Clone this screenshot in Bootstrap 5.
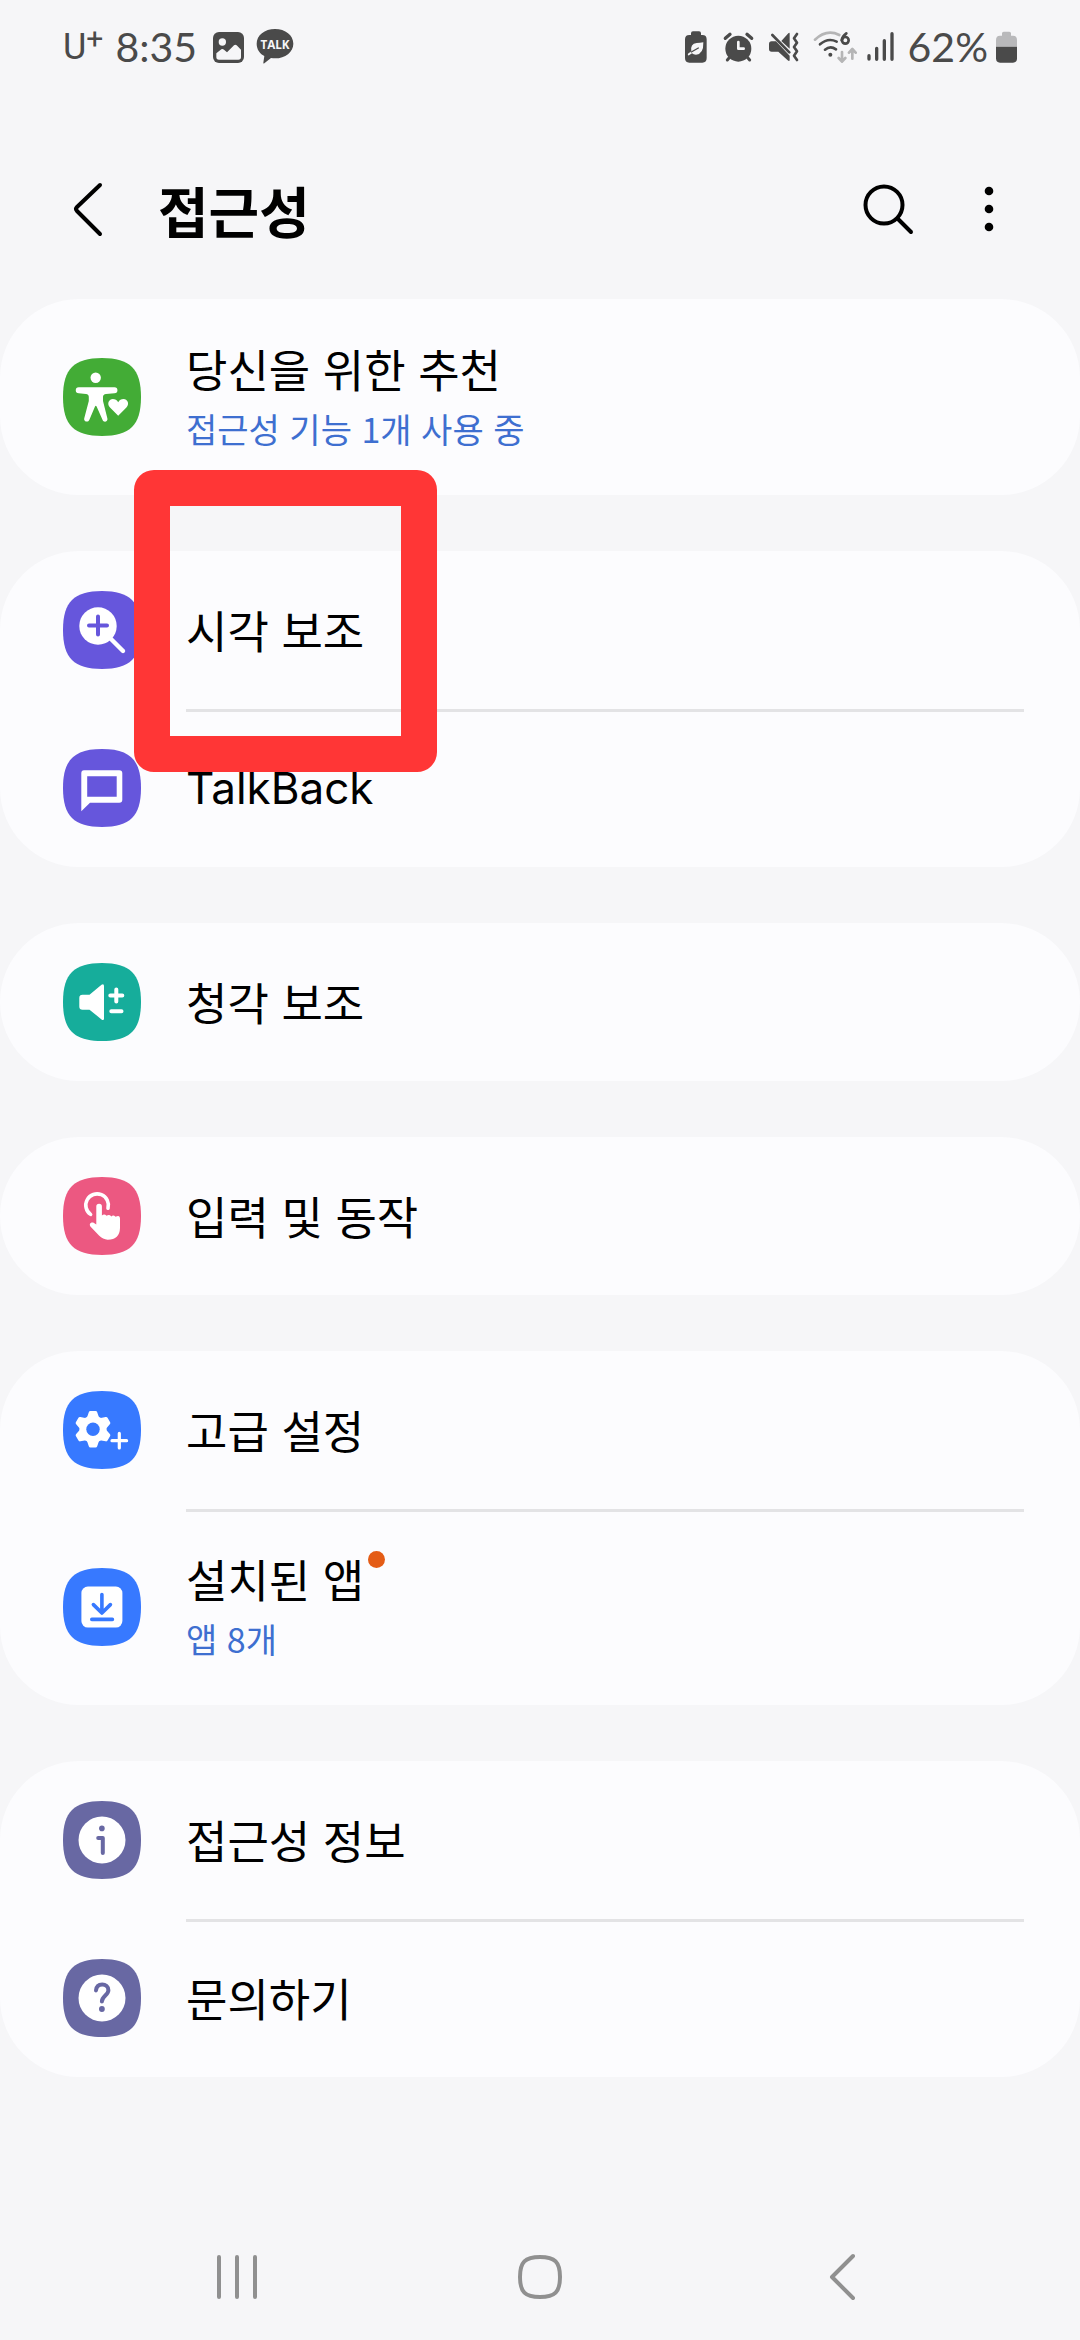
<!DOCTYPE html>
<html lang="ko">
<head>
<meta charset="utf-8">
<meta name="viewport" content="width=device-width, initial-scale=1">
<title>접근성</title>
<link href="https://cdn.jsdelivr.net/npm/bootstrap@5.3.0/dist/css/bootstrap.min.css" rel="stylesheet">
<style>
  body { background: #f6f6f8; color: #000; font-family: "Noto Sans CJK KR", "Noto Sans", sans-serif; }
  svg { display: block; flex: none; }
  .status-bar { height: 94px; padding: 0 63px; color: #4a4a4a; font: 400 41px/48px Lato, sans-serif; }
  .carrier { font-family: Roboto, sans-serif; font-size: 36px; }
  .carrier sup { font-size: 30px; top: -10px; line-height: 0; }
  .app-header { height: 205px; padding: 24px 70px 0 60px; }
  .app-header h1 { font-size: 55px; line-height: 72px; font-weight: 700; padding-left: 41px; }
  .icon-btn { border: 0; padding: 0; background: none; color: inherit; }
  .groups { gap: 56px; }
  .group { background: #fcfcfe; border-radius: 79px; position: relative; }
  .entry { min-height: 158px; padding: 0 56px 0 63px; gap: 45px; color: #000; text-decoration: none; }
  .entry.tall { min-height: 196px; }
  .entry-body { font-size: 45px; line-height: 60px; }
  .tall .entry-body { padding-top: 4px; }
  .entry + .entry .entry-body { box-shadow: inset 0 3px #e3e3e5; }
  .entry-sub { font-size: 34px; color: #3e6fd0; }
  .latin { font-family: Inter, sans-serif; font-size: 44px; }
  .new-dot { width: 17px; height: 17px; background: #e45c16; left: 100%; top: 2px; margin-left: 4px; }
  .highlight { left: 134px; top: -81px; width: 303px; height: 302px; border: 36px solid #ff3636; border-radius: 20px; z-index: 2; pointer-events: none; }
  .nav-keys { height: 126px; padding: 0 86px; color: #909090; }
</style>
</head>
<body>
<svg width="0" height="0" class="position-absolute" aria-hidden="true">
  <defs><path id="tile" d="M39 0C67 0 78 11 78 39S67 78 39 78 0 67 0 39 11 0 39 0Z"/></defs>
</svg>
<div class="min-vh-100 d-flex flex-column">

  <div class="status-bar d-flex align-items-center justify-content-between">
    <div class="d-flex align-items-center">
      <span class="carrier">U<sup>+</sup></span>
      <span class="ms-2 ps-1">8:35</span>
      <svg class="ms-3" width="31" height="34" viewBox="516 60 93 102" role="img" aria-label="사진">
        <rect x="516" y="66" width="93" height="93" rx="18" fill="currentColor"/>
        <circle cx="544" cy="96" r="11" fill="#f6f6f8"/>
        <path d="M526 130L541 118Q545 115 549 119L558 127L579 106Q583 102 587 106L600 119V142Q600 149 592 149H534Q526 149 526 142Z" fill="#f6f6f8"/>
      </svg>
      <svg class="ms-2 ps-1" width="42" height="36" viewBox="647 60 114 108" role="img" aria-label="카카오톡">
        <path d="M704 60C735 60 759 79 759 104S735 148 704 148Q698 148 692 147L672 163Q669 165 669 161L672 141C658 134 649 120 649 104C649 79 673 60 704 60Z" fill="currentColor"/>
        <text x="704" y="120" text-anchor="middle" font-family="Open Sans, sans-serif" font-size="35" font-weight="700" fill="#f6f6f8">TALK</text>
      </svg>
    </div>
    <div class="d-flex align-items-center">
      <svg width="37" height="34" viewBox="69 60 111 102" aria-hidden="true">
        <path d="M87 75V70Q87 64 93 64H111Q117 64 117 70V75H121Q134 75 134 88V144Q134 158 121 158H82Q69 158 69 144V88Q69 75 82 75Z" fill="currentColor"/>
        <path d="M124 97Q125 133 102 134Q94 134 90 130L81 136Q76 137 78 131L88 124Q84 101 104 99Q114 99 124 97Z" fill="#f6f6f8"/>
        <path d="M88 126L109 114" stroke="currentColor" stroke-width="4" stroke-linecap="round"/>
      </svg>
      <svg width="45" height="34" viewBox="180 60 135 102" aria-hidden="true">
        <circle cx="229" cy="116" r="39" fill="currentColor"/>
        <path d="M190 85L204 73M269 85L255 73" stroke="currentColor" stroke-width="10" stroke-linecap="round"/>
        <path d="M203 142L196 150M256 142L263 150" stroke="currentColor" stroke-width="9" stroke-linecap="round"/>
        <path d="M229 96V116H245" fill="none" stroke="#f6f6f8" stroke-width="8" stroke-linecap="round" stroke-linejoin="round"/>
      </svg>
      <svg width="44" height="34" viewBox="315 60 132 102" aria-hidden="true">
        <path d="M383 71V116L358 93L379 70Q383 66 383 71ZM329 94H342L383 137V149Q383 156 377 151L349 125H329Q321 125 321 117V102Q321 94 329 94Z" fill="currentColor"/>
        <path d="M331 75L382 127" stroke="currentColor" stroke-width="8" stroke-linecap="round"/>
        <path d="M405 72L396 85L405 98L396 111L405 124L396 137L405 150" fill="none" stroke="currentColor" stroke-width="8" stroke-linecap="round" stroke-linejoin="round"/>
      </svg>
      <svg width="54" height="34" viewBox="447 60 162 102" aria-hidden="true">
        <g fill="none" stroke-width="8" stroke-linecap="round" stroke-linejoin="round">
          <path d="M459 89Q494 56 532 75M540 126V154M530 144L540 155L550 144M571 146V118M561 128L571 117L581 128" stroke="#b5b5b6"/>
          <path d="M474 103Q498 82 524 95M489 119Q505 106 522 118" stroke="currentColor"/>
          <path d="M553 70Q541 79 539 91" stroke="currentColor"/>
          <circle cx="550" cy="91" r="10" stroke="currentColor"/>
        </g>
        <circle cx="505" cy="134" r="6" fill="currentColor"/>
      </svg>
      <svg width="43" height="34" viewBox="609 60 129 102" aria-hidden="true">
        <path d="M621 137V147M644 115V148M667 92V148M690 71V148" stroke="currentColor" stroke-width="10" stroke-linecap="round"/>
      </svg>
      <span class="me-2">62%</span>
      <svg width="21" height="34" viewBox="1008 60 63 102" aria-hidden="true">
        <path d="M1026 77V70Q1026 65 1031 65H1048Q1053 65 1053 70V77H1059Q1071 77 1071 90V110H1008V90Q1008 77 1020 77Z" fill="#b9b9bb"/>
        <path d="M1008 110H1071V145Q1071 158 1059 158H1020Q1008 158 1008 145Z" fill="currentColor"/>
      </svg>
    </div>
  </div>

  <header class="app-header d-flex align-items-center">
    <button class="icon-btn" type="button" aria-label="뒤로">
      <svg width="57" height="60" viewBox="0 0 57 60"><path d="M40 6L17 28Q15 30 17 32L40 55" fill="none" stroke="currentColor" stroke-width="4" stroke-linecap="round" stroke-linejoin="round"/></svg>
    </button>
    <h1 class="m-0 flex-grow-1">접근성</h1>
    <button class="icon-btn" type="button" aria-label="검색">
      <svg width="60" height="60" viewBox="0 0 60 60"><g fill="none" stroke="currentColor" stroke-width="4" stroke-linecap="round"><circle cx="22" cy="26" r="18.5"/><path d="M36 40L49 53"/></g></svg>
    </button>
    <button class="icon-btn ms-5" type="button" aria-label="옵션 더보기">
      <svg width="40" height="60" viewBox="0 0 40 60" fill="currentColor"><circle cx="19" cy="12" r="4.3"/><circle cx="19" cy="30" r="4.3"/><circle cx="19" cy="48" r="4.3"/></svg>
    </button>
  </header>

  <main class="groups d-flex flex-column">
    <section class="group">
      <a href="#" class="entry tall d-flex align-items-stretch">
        <svg class="align-self-center" width="78" height="78" viewBox="0 0 78 78" fill="#fff">
          <use href="#tile" fill="#43ac36"/>
          <circle cx="32.7" cy="19.7" r="5.2"/>
          <path d="M15.7 29.3H51.5A2.9 2.9 0 0 1 51.5 35.2L43 36Q40 36.4 40 39V43L44.4 60.6C45.2 63.8 40.6 65 39.6 62L33.6 48.5Q32.8 47 32 48.5L26.4 61.8C25.2 65 20.4 63.6 21.2 60.4L25.8 43V39Q25.8 36.4 23 36L15.7 35.2A2.9 2.9 0 0 1 15.7 29.3Z"/>
          <path d="M55.2 57.7L47 49.4C43.4 45.6 46.2 41 49.8 41Q53.3 41 55.2 44.2Q57 41 60.6 41C64.2 41 67 45.6 63.4 49.4Z"/>
        </svg>
        <span class="entry-body flex-grow-1 d-flex flex-column justify-content-center">
          <span>당신을 위한 추천</span>
          <span class="entry-sub">접근성 기능 1개 사용 중</span>
        </span>
      </a>
    </section>

    <section class="group">
      <a href="#" class="entry d-flex align-items-stretch">
        <svg class="align-self-center" width="78" height="78" viewBox="0 0 78 78">
          <use href="#tile" fill="#6656dc"/>
          <circle cx="35" cy="35" r="18.7" fill="#fff"/>
          <path d="M47 47L60 60" stroke="#fff" stroke-width="4.4" stroke-linecap="round"/>
          <path d="M26 34.6H44M35 25.6V43.6" stroke="#6656dc" stroke-width="4" stroke-linecap="round"/>
        </svg>
        <span class="entry-body flex-grow-1 d-flex flex-column justify-content-center">시각 보조</span>
      </a>
      <a href="#" class="entry d-flex align-items-stretch">
        <svg class="align-self-center" width="78" height="78" viewBox="0 0 78 78">
          <use href="#tile" fill="#6656dc"/>
          <path fill="#fff" fill-rule="evenodd" d="M21 21.3H56.3Q59.3 21.3 59.3 24.3V50.7Q59.3 53.7 56.3 53.7H27L18.3 62.3V24.3Q18.3 21.3 21 21.3ZM24.2 27.3V47.7H53.7V27.3Z"/>
        </svg>
        <span class="entry-body latin flex-grow-1 d-flex flex-column justify-content-center">TalkBack</span>
      </a>
      <div class="highlight position-absolute"></div>
    </section>

    <section class="group">
      <a href="#" class="entry d-flex align-items-stretch">
        <svg class="align-self-center" width="78" height="78" viewBox="0 0 78 78">
          <use href="#tile" fill="#16ad9b"/>
          <path fill="#fff" d="M19.5 31.7H26.5L38.5 21.8Q41 20.4 41 23V55.4Q41 58 38.5 56.4L26.5 46.7H19.5Q16.3 46.7 16.3 43.5V35Q16.3 31.7 19.5 31.7Z"/>
          <path d="M47.3 32.5H59.3M53.3 26.5V38.5M48.3 48.2H58.5" stroke="#fff" stroke-width="4" stroke-linecap="round"/>
        </svg>
        <span class="entry-body flex-grow-1 d-flex flex-column justify-content-center">청각 보조</span>
      </a>
    </section>

    <section class="group">
      <a href="#" class="entry d-flex align-items-stretch">
        <svg class="align-self-center" width="78" height="78" viewBox="0 0 78 78">
          <use href="#tile" fill="#ec5881"/>
          <path d="M27.6 37.4A11.3 11.3 0 1 1 45 31.2" fill="none" stroke="#fff" stroke-width="3.6" stroke-linecap="round"/>
          <path fill="#fff" d="M33.3 29.6A2.8 2.8 0 0 1 38.9 29.6V38.6Q41.2 36.4 43.6 38.8Q46 36.8 48.4 39.4Q50.2 37.4 52.6 39.8Q57 37.6 57 42V51Q56.6 62.8 44.6 62.7Q40 62.6 36 58.6L27.4 49.4C25.6 46.6 28.6 44.6 31 46L33.3 47.4Z"/>
        </svg>
        <span class="entry-body flex-grow-1 d-flex flex-column justify-content-center">입력 및 동작</span>
      </a>
    </section>

    <section class="group">
      <a href="#" class="entry d-flex align-items-stretch">
        <svg class="align-self-center" width="78" height="78" viewBox="0 0 78 78">
          <use href="#tile" fill="#3779ff"/>
          <g transform="translate(30 38.2)">
            <g fill="#fff">
              <circle r="13.6"/>
              <path id="tooth" d="M-6.6 -10L-4.2 -17Q-3.8 -18.3 -2.6 -18.3H2.6Q3.8 -18.3 4.2 -17L6.6 -10V10L4.2 17Q3.8 18.3 2.6 18.3H-2.6Q-3.8 18.3 -4.2 17L-6.6 10Z"/>
              <use href="#tooth" transform="rotate(60)"/>
              <use href="#tooth" transform="rotate(120)"/>
            </g>
            <circle r="6.7" fill="#3779ff"/>
          </g>
          <path d="M49 49.7H63.6M56.3 42.4V57" stroke="#fff" stroke-width="3.2" stroke-linecap="round"/>
        </svg>
        <span class="entry-body flex-grow-1 d-flex flex-column justify-content-center">고급 설정</span>
      </a>
      <a href="#" class="entry tall d-flex align-items-stretch">
        <svg class="align-self-center" width="78" height="78" viewBox="0 0 78 78">
          <use href="#tile" fill="#3779ff"/>
          <rect x="18.4" y="18.6" width="41" height="41" rx="6.5" fill="#fff"/>
          <path d="M38.9 26.5V44.5M30.4 36.6L38.9 45L47.4 36.6M28.8 51.4H49.4" fill="none" stroke="#3779ff" stroke-width="3.6" stroke-linecap="round" stroke-linejoin="round"/>
        </svg>
        <span class="entry-body flex-grow-1 d-flex flex-column justify-content-center align-items-start">
          <span class="position-relative">설치된 앱<span class="new-dot position-absolute rounded-circle"></span></span>
          <span class="entry-sub">앱 8개</span>
        </span>
      </a>
    </section>

    <section class="group">
      <a href="#" class="entry d-flex align-items-stretch">
        <svg class="align-self-center" width="78" height="78" viewBox="0 0 78 78">
          <use href="#tile" fill="#6868a3"/>
          <circle cx="39" cy="39" r="23.5" fill="#fff"/>
          <circle cx="38.9" cy="27.4" r="2.8" fill="#6868a3"/>
          <path d="M35.2 36.9H39.8V52" fill="none" stroke="#6868a3" stroke-width="4" stroke-linecap="round" stroke-linejoin="round"/>
        </svg>
        <span class="entry-body flex-grow-1 d-flex flex-column justify-content-center">접근성 정보</span>
      </a>
      <a href="#" class="entry d-flex align-items-stretch">
        <svg class="align-self-center" width="78" height="78" viewBox="0 0 78 78">
          <use href="#tile" fill="#6868a3"/>
          <circle cx="39" cy="39" r="23.5" fill="#fff"/>
          <circle cx="38.9" cy="50" r="2.9" fill="#6868a3"/>
          <path d="M33 31.4C33.4 27.4 36 25.5 39.2 25.5C42.6 25.5 45.4 27.8 45.4 31.2C45.4 36 38.9 37 38.9 42.4" fill="none" stroke="#6868a3" stroke-width="4" stroke-linecap="round"/>
        </svg>
        <span class="entry-body flex-grow-1 d-flex flex-column justify-content-center">문의하기</span>
      </a>
    </section>
  </main>

  <nav class="nav-keys d-flex mt-auto" aria-label="탐색">
    <button class="icon-btn flex-fill d-flex align-items-center justify-content-center" type="button" aria-label="최근 앱">
      <svg width="44" height="48" viewBox="0 0 44 48"><path d="M4 4V44M22 4V44M40 4V44" stroke="currentColor" stroke-width="4" stroke-linecap="round"/></svg>
    </button>
    <button class="icon-btn flex-fill d-flex align-items-center justify-content-center" type="button" aria-label="홈">
      <svg width="44" height="48" viewBox="0 0 44 48"><path d="M22 4C37 4 42 9 42 24S37 44 22 44 2 39 2 24 7 4 22 4Z" fill="none" stroke="currentColor" stroke-width="4"/></svg>
    </button>
    <button class="icon-btn flex-fill d-flex align-items-center justify-content-center" type="button" aria-label="뒤로 가기">
      <svg width="44" height="48" viewBox="0 0 44 48"><path d="M32 3L11 24L32 45" fill="none" stroke="currentColor" stroke-width="4" stroke-linecap="round" stroke-linejoin="round"/></svg>
    </button>
  </nav>
</div>
<script src="https://cdn.jsdelivr.net/npm/bootstrap@5.3.0/dist/js/bootstrap.bundle.min.js"></script>
</body>
</html>
